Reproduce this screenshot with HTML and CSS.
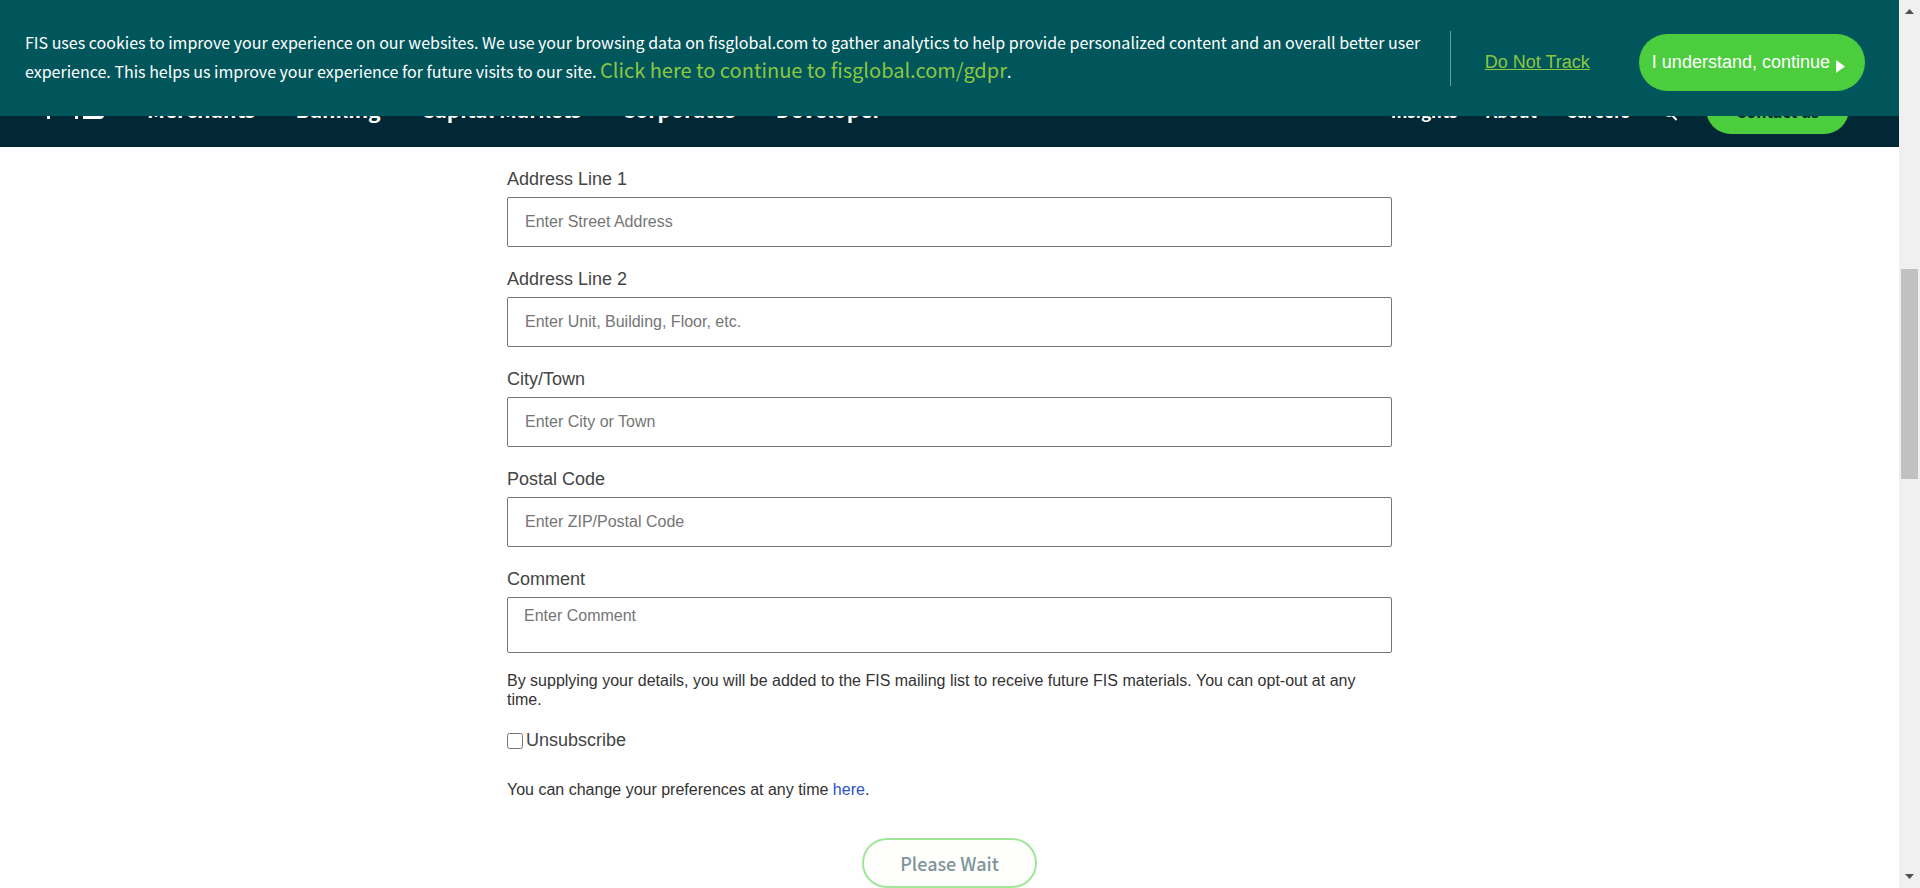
FILE: index.html
```html
<!DOCTYPE html>
<html lang="en">
<head>
<meta charset="utf-8">
<title>FIS preferences</title>
<link rel="stylesheet" href="styles.css">
</head>
<body>
<div class="window">
  <div class="page">
    <header class="header">
      <a class="logo" href="#" aria-label="FIS">
        <svg width="64" height="32" viewBox="0 0 64 32"><path fill="#fff" d="M5 0h22v4H8v9h16v4H8v15H5zM33 0h3v32h-3zM42 0h20v4H46v9h13q3 0 3 3v12q0 4-4 4H41v-3h17V17H42z"/></svg>
      </a>
      <nav class="nav nav-main">
        <a href="#">Merchants</a>
        <a href="#">Banking</a>
        <a href="#">Capital Markets</a>
        <a href="#">Corporates</a>
        <a href="#">Developer</a>
      </nav>
      <nav class="nav nav-side">
        <a href="#">Insights</a>
        <a href="#">About</a>
        <a href="#">Careers</a>
        <button class="search" aria-label="Search">
          <svg width="14" height="24" viewBox="0 0 14 24" fill="none" stroke="#fff" stroke-width="2"><circle cx="6" cy="14" r="5"/><path d="M9 18l4.500 5"/></svg>
        </button>
        <a class="contact" href="#">Contact us</a>
      </nav>
    </header>
    <section class="cookies">
      <p class="cookies-text">FIS uses cookies to improve your experience on our websites. We use your browsing data on fisglobal.com to gather analytics to help provide personalized content and an overall better user experience. This helps us improve your experience for future visits to our site. <a class="gdpr" href="#">Click here to continue to fisglobal.com/gdpr</a>.</p>
      <div class="cookies-actions">
        <a class="track" href="#">Do Not Track</a>
        <button class="accept">I understand, continue
          <svg width="10" height="21" viewBox="0 0 10 21"><path fill="#fff" d="M1 8l9 6.500-9 6.500z"/></svg>
        </button>
      </div>
    </section>
    <form class="form">
      <div class="field">
        <label for="address1">Address Line 1</label>
        <input id="address1" type="text" placeholder="Enter Street Address">
      </div>
      <div class="field">
        <label for="address2">Address Line 2</label>
        <input id="address2" type="text" placeholder="Enter Unit, Building, Floor, etc.">
      </div>
      <div class="field">
        <label for="city">City/Town</label>
        <input id="city" type="text" placeholder="Enter City or Town">
      </div>
      <div class="field">
        <label for="postal">Postal Code</label>
        <input id="postal" type="text" placeholder="Enter ZIP/Postal Code">
      </div>
      <div class="field field-comment">
        <label for="comment">Comment</label>
        <textarea id="comment" placeholder="Enter Comment"></textarea>
      </div>
      <p class="note">By supplying your details, you will be added to the FIS mailing list to receive future FIS materials. You can opt-out at any time.</p>
      <div class="check">
        <input id="unsubscribe" type="checkbox">
        <label for="unsubscribe">Unsubscribe</label>
      </div>
      <p class="note">You can change your preferences at any time <a class="here" href="#">here</a>.</p>
      <button class="submit" type="submit" disabled>Please Wait</button>
    </form>
  </div>
  <div class="scrollbar" aria-hidden="true">
    <svg width="9" height="5" viewBox="0 0 9 5"><path fill="#505050" d="M0 5l4.500-5L9 5z"/></svg>
    <div class="track-area"><div class="thumb"></div></div>
    <svg width="9" height="5" viewBox="0 0 9 5"><path fill="#505050" d="M0 0h9L4.500 5z"/></svg>
  </div>
</div>
</body>
</html>
```
FILE: styles.css
```css
* { box-sizing: border-box; }

body {
  margin: 0;
  font-family: "Liberation Sans", Arial, sans-serif;
  background: #fff;
  overflow: hidden;
}

p { margin: 0; }
button { font-family: inherit; cursor: pointer; }

.window {
  display: grid;
  grid-template-columns: minmax(0, 1fr) 21px;
  height: 100vh;
}

.page {
  position: relative;
  overflow: hidden;
}

/* Site header */
.header {
  display: flex;
  align-items: flex-end;
  height: 147px;
  padding: 0 50px 13px 42px;
  background: #012834;
}

.logo { display: flex; margin-bottom: 15px; }

.nav {
  display: flex;
  align-items: center;
  height: 50px;
  font: 700 21px/24px "Noto Sans CJK SC", sans-serif;
}

.nav a { color: #fff; text-decoration: none; }
.nav-main { gap: 40px; margin-left: 41px; }
.nav-side { gap: 29px; margin-left: auto; font-size: 17px; }
.nav-side a { padding-top: 4px; }

.search {
  display: flex;
  margin: 0 0 0 4px;
  padding: 0;
  border: 0;
  background: none;
}

.nav .contact {
  padding: 15px 30px 11px;
  border-radius: 25px;
  background: #4bcd3e;
  font-size: 16px;
  color: #012834;
}

/* Cookie banner */
.cookies {
  position: absolute;
  inset: 0 0 auto 0;
  display: flex;
  align-items: flex-start;
  justify-content: space-between;
  height: 116px;
  padding: 28px 34px 0 25px;
  background: #01565b;
}

.cookies-text {
  max-width: 1410px;
  font: 400 16px/29px "Noto Sans CJK SC", sans-serif;
  color: #fff;
}

.gdpr {
  font-size: 20px;
  line-height: 20px;
  color: #8dc63f;
  text-decoration: none;
}

.cookies-actions {
  display: flex;
  flex-shrink: 0;
  align-items: center;
  gap: 49px;
  height: 68px;
  font-size: 18px;
}

.track {
  align-self: flex-start;
  display: flex;
  align-items: center;
  height: 55px;
  margin-top: 3px;
  padding: 7px 0 0 34px;
  border-left: 1px solid #5f9fa0;
  color: #8dc63f;
}

.accept {
  display: flex;
  align-items: center;
  gap: 5px;
  height: 57px;
  padding: 0 20px 0 13px;
  border: 0;
  border-radius: 29px;
  background: #4bcd3e;
  font-size: 18px;
  color: #fff;
}

/* Preferences form */
.form {
  display: flex;
  flex-direction: column;
  max-width: 885px;
  margin: 0 auto;
  padding-top: 22px;
}

.field {
  display: flex;
  flex-direction: column;
  gap: 7px;
  margin-bottom: 22px;
  color: #444;
}

.field-comment { margin-bottom: 18px; }

.field label, .check label { font-size: 18px; line-height: 21px; }

.field input, .field textarea {
  width: 100%;
  height: 50px;
  padding: 0 17px;
  border: 1px solid #767676;
  border-radius: 2px;
  background: #fff;
  font: 16px/19px "Liberation Sans", Arial, sans-serif;
}

.field textarea {
  height: 56px;
  padding: 8px 16px;
  resize: none;
}

.field ::placeholder { color: #757575; }

.note {
  font-size: 16px;
  line-height: 19px;
  color: #333;
}

.check {
  display: flex;
  align-items: center;
  gap: 3px;
  margin: 21px 0 29px;
  color: #444;
}

.check input { width: 16px; height: 16px; margin: 0; }

.here { color: #2a52be; text-decoration: none; }

.submit {
  align-self: center;
  height: 50px;
  margin-top: 39px;
  padding: 0 36px;
  border: 2px solid #a0e69a;
  border-radius: 25px;
  background: #fefffd;
  font: 500 18px/24px "Noto Sans CJK SC", sans-serif;
  color: #80939a;
}

/* Scrollbar */
.scrollbar {
  display: flex;
  flex-direction: column;
  align-items: center;
  padding: 9px 0;
  background: #f0f0f0;
}

.track-area {
  flex: 1;
  padding-top: 255px;
}

.thumb {
  width: 17px;
  height: 210px;
  background: #c1c1c1;
}
```
